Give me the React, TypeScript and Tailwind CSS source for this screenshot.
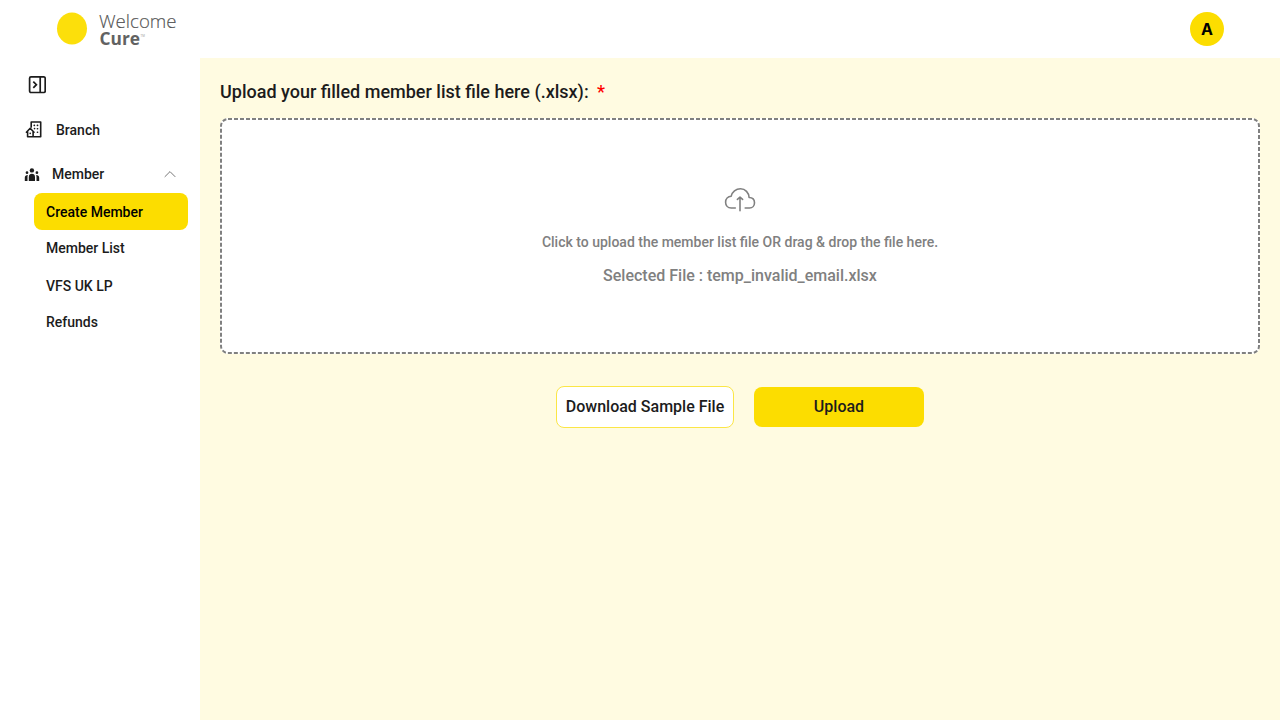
import type { ReactNode } from "react";

function Logo() {
  return (
    <svg width="126" height="38" viewBox="0 0 126 38" className="block overflow-visible">
      <ellipse cx="16" cy="18.5" rx="15" ry="16" fill="#fcdf0b" />
      <text x="43" y="18.4" fontFamily="'Open Sans', sans-serif" fontWeight="300" fontSize="18.6" fill="#555" stroke="#555" strokeWidth=".15" textLength="77.5" lengthAdjust="spacingAndGlyphs">Welcome</text>
      <text x="43.5" y="35.4" fontFamily="'Open Sans', sans-serif" fontWeight="700" fontSize="18.6" fill="#626262" textLength="40.5" lengthAdjust="spacingAndGlyphs">Cure</text>
      <text x="84.5" y="27" fontFamily="'Open Sans', sans-serif" fontSize="3" fill="#999">TM</text>
    </svg>
  );
}

function PanelIcon() {
  return (
    <svg width="18" height="18" viewBox="0 0 18 18" fill="none" stroke="#1c1c1c" strokeWidth="1.7" className="block">
      <rect x="1.6" y=".9" width="15.6" height="15.6" rx="1.4" />
      <path d="M12.2 1v15.6M5.3 5.6l3.1 3.1-3.1 3.1" />
    </svg>
  );
}

function BranchIcon() {
  return (
    <svg width="18" height="18" viewBox="0 0 18 18" fill="none" stroke="#1c1c1c" strokeWidth="1.6" strokeLinejoin="round" strokeLinecap="round" className="block">
      <path d="M6.2 6.1V1h9.5v14.8H2.6v-5M1.4 11.2l3.8-3.9 3.8 3.9M8.1 11v4.8" />
      <path d="M5.2 12.2v.2M9.2 4.4h.2M12.4 4.4h.2M12.4 7.8h.2M12.4 11.2h.2M9.5 7.6h.1" />
    </svg>
  );
}

function MembersIcon() {
  return (
    <svg width="16" height="16" viewBox="0 0 16 16" fill="#1c1c1c" className="mt-0.5 mr-3 block">
      <circle cx="7.9" cy="3.4" r="2.2" />
      <circle cx="3" cy="5.7" r="1.35" />
      <circle cx="12.9" cy="5.7" r="1.35" />
      <path d="M4.8 14.1V9.9C4.8 7.9 6.1 6.8 7.9 6.8S11 7.9 11 9.9v4.2Z" />
      <path d="M.8 14.1v-3.3C.8 9 2 8 3.9 8c-.3.6-.4 1.3-.4 2v4.1ZM15.2 14.1v-3.3c0-1.8-1.2-2.8-3.1-2.8.3.6.4 1.3.4 2v4.1Z" />
    </svg>
  );
}

function CloudUploadIcon() {
  return (
    <svg width="32" height="26" viewBox="0 0 32 26" fill="none" stroke="#808080" strokeWidth="1.6" strokeLinecap="round" strokeLinejoin="round" className="mt-[67px] block">
      <path d="M11.3 21H7.2C3.7 21 1.6 18.4 1.6 15.2c0-3.2 2.3-5.8 5.6-6 .9-4.2 4.7-7.4 9.3-7.4 4.9 0 8.3 3.9 8.6 8.7 3.2.1 5.4 2.2 5.4 5.2S28.4 21 25.6 21H21.2" />
      <path d="M16 23.8V10.6M13.4 12.4l2.6-2.2 2.6 2.2" />
    </svg>
  );
}

function SubItem({ children, active = false, className }: { children: ReactNode; active?: boolean; className: string }) {
  return (
    <a className={`flex items-center rounded-lg pl-3 ${active ? "bg-[#fcdd00] text-black" : ""} ${className}`}>
      {children}
    </a>
  );
}

export default function App() {
  return (
    <div className="flex h-screen w-full flex-col overflow-hidden bg-white font-['Roboto',sans-serif] font-medium text-[#1c1c1c]">
      <header className="flex h-[58px] shrink-0 items-center justify-between pr-14 pl-14">
        <Logo />
        <div className="flex size-[34px] items-center justify-center rounded-full bg-[#fcdd00] font-['Inter',sans-serif] text-base font-bold text-black">A</div>
      </header>
      <div className="flex min-h-0 flex-1">
        <aside className="flex w-[200px] shrink-0 flex-col text-sm">
          <div className="mt-[18px] ml-7 h-[18px]"><PanelIcon /></div>
          <a className="mt-[26px] ml-[25px] flex h-5 items-center gap-[13px]"><BranchIcon />Branch</a>
          <div className="mt-6 flex h-5 items-center px-6">
            <MembersIcon />
            Member
            <svg width="12" height="8" viewBox="0 0 12 8" fill="none" stroke="#777" className="ml-auto">
              <path d="M.7 6.9 6 1.6l5.3 5.3" />
            </svg>
          </div>
          <nav className="mt-[9px] mr-3 ml-[34px] flex flex-col">
            <SubItem active className="h-[37px]">Create Member</SubItem>
            <SubItem className="h-9">Member List</SubItem>
            <SubItem className="h-10">VFS UK LP</SubItem>
            <SubItem className="h-8">Refunds</SubItem>
          </nav>
        </aside>
        <main className="flex flex-1 flex-col bg-[#fffbe1] px-5 pt-5">
          <h1 className="text-lg leading-7 font-medium">
            Upload your filled member list file here (.xlsx): <span className="ml-1 text-[#ff0000]">*</span>
          </h1>
          <div className="relative mt-3 flex h-[236px] flex-col items-center rounded-lg bg-white pt-0.5 text-[#808080]">
            <svg width="1040" height="236" viewBox="0 0 1040 236" fill="none" className="pointer-events-none absolute inset-0">
              <rect x="1" y="1" width="1038" height="234" rx="7" stroke="#808080" strokeWidth="2" strokeDasharray="4 2" />
            </svg>
            <CloudUploadIcon />
            <p className="mt-[19px] text-sm leading-5">Click to upload the member list file OR drag &amp; drop the file here.</p>
            <p className="mt-3 text-base leading-6">Selected File : temp_invalid_email.xlsx</p>
          </div>
          <div className="mt-8 flex items-center justify-center gap-5">
            <button className="h-[42px] w-[178px] rounded-lg border border-[#fbe646] bg-white text-base">Download Sample File</button>
            <button className="h-10 w-[170px] rounded-lg bg-[#fcdd00] text-base">Upload</button>
          </div>
        </main>
      </div>
    </div>
  );
}
